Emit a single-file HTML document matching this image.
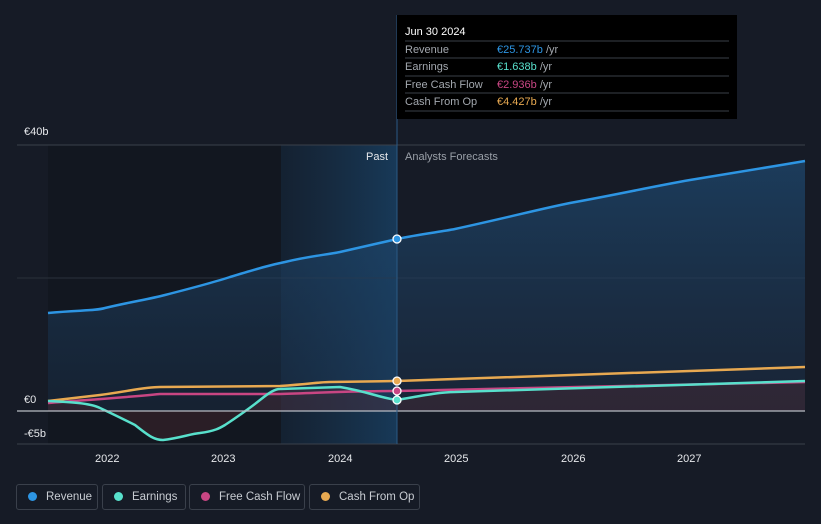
<!DOCTYPE html>
<html><head><meta charset="utf-8"><style>
body{margin:0;background:#161b26;width:821px;height:524px;overflow:hidden;font-family:"Liberation Sans",sans-serif;}
.lg{position:absolute;top:484px;height:26px;border:1px solid #3a404b;border-radius:3px;color:#c8ccd2;font-size:11.5px;line-height:24px;box-sizing:border-box;white-space:nowrap;overflow:hidden}
.lg i{display:inline-block;width:9px;height:9px;border-radius:50%;margin:0 9px 0 11px;vertical-align:-1px}
</style></head><body>
<svg width="821" height="524" style="position:absolute;left:0;top:0">
<defs>
<linearGradient id="rg" x1="0" y1="0" x2="0" y2="1"><stop offset="0" stop-color="#1e4a72" stop-opacity=".7"/><stop offset="1" stop-color="#1e3a5a" stop-opacity=".3"/></linearGradient>
<linearGradient id="hl" x1="0" y1="0" x2="1" y2="0"><stop offset="0" stop-color="#1a3a5a" stop-opacity=".3"/><stop offset="1" stop-color="#1a4870" stop-opacity=".7"/></linearGradient>
</defs>
<rect x="48" y="145" width="349" height="299" fill="#121720"/>
<rect x="281" y="145" width="116" height="299" fill="url(#hl)"/>
<line x1="17" y1="145" x2="805" y2="145" stroke="#3a404b"/>
<line x1="17" y1="278" x2="805" y2="278" stroke="#2a303b"/>
<path d="M48,313 C80,310 95,311 105,308 C130,302 150,299 165,295 C200,286 215,282 230,277 C260,268 270,265 285,262 C310,256 325,255 340,252 C370,245 380,243 397,239 C420,234 440,232 455,229 C510,217 540,209 570,203 C620,194 650,187 690,180 C740,172 770,167 805,161 L805,411 L48,411Z" fill="url(#rg)"/>
<path d="M48,401 C70,402 90,403 100,408 C115,415 125,420 135,425 C150,437 155,440 163,440 C180,438 190,434 200,433 C215,431 220,428 225,425 C240,415 250,408 260,400 C270,392 275,389 280,389 L340,387 C370,392 380,398 397,400 C420,396 440,392 455,392 L805,381 L805,411 L48,411Z" fill="#5a2a33" fill-opacity=".35"/>
<path d="M48,313 C80,310 95,311 105,308 C130,302 150,299 165,295 C200,286 215,282 230,277 C260,268 270,265 285,262 C310,256 325,255 340,252 C370,245 380,243 397,239 C420,234 440,232 455,229 C510,217 540,209 570,203 C620,194 650,187 690,180 C740,172 770,167 805,161" fill="none" stroke="#2d95e3" stroke-width="2.5"/>
<path d="M48,401 L100,395 C130,391 145,387 160,387 L280,386 C310,384 320,382 330,382 L397,381 L805,367" fill="none" stroke="#e8a951" stroke-width="2.5"/>
<path d="M48,403 C100,399 130,397 160,394 L280,394 C320,393 340,391 397,391 L805,382" fill="none" stroke="#c84683" stroke-width="2.5"/>
<path d="M48,401 C70,402 90,403 100,408 C115,415 125,420 135,425 C150,437 155,440 163,440 C180,438 190,434 200,433 C215,431 220,428 225,425 C240,415 250,408 260,400 C270,392 275,389 280,389 L340,387 C370,392 380,398 397,400 C420,396 440,392 455,392 L805,381" fill="none" stroke="#58e0cc" stroke-width="2.5"/>
<line x1="17" y1="411" x2="805" y2="411" stroke="#b8bcc4" stroke-width="1.2"/>
<line x1="17" y1="444" x2="805" y2="444" stroke="#3a404b"/>
<line x1="397" y1="15" x2="397" y2="444" stroke="#2a5a85"/>
<circle cx="397" cy="239" r="4" fill="#2d95e3" stroke="#fff" stroke-width="1.3"/>
<circle cx="397" cy="381" r="4" fill="#e8a951" stroke="#fff" stroke-width="1.3"/>
<circle cx="397" cy="391" r="4" fill="#c84683" stroke="#fff" stroke-width="1.3"/>
<circle cx="397" cy="400" r="4" fill="#58e0cc" stroke="#fff" stroke-width="1.3"/>
<g font-size="11" fill="#e6e8eb" font-family="Liberation Sans">
<text x="24" y="135">€40b</text><text x="24" y="403">€0</text><text x="24" y="437">-€5b</text>
<text x="95" y="462">2022</text><text x="211" y="462">2023</text><text x="328" y="462">2024</text><text x="444" y="462">2025</text><text x="561" y="462">2026</text><text x="677" y="462">2027</text>
<text x="366" y="160">Past</text>
<text x="405" y="160" fill="#9aa0a8">Analysts Forecasts</text>
</g>
<rect x="397" y="15" width="340" height="104" fill="#000"/>
<g font-size="11" font-family="Liberation Sans">
<text x="405" y="35" fill="#fff">Jun 30 2024</text>
<g stroke="#3a3f47"><line x1="405" y1="41" x2="729" y2="41"/><line x1="405" y1="58" x2="729" y2="58"/><line x1="405" y1="76" x2="729" y2="76"/><line x1="405" y1="93" x2="729" y2="93"/><line x1="405" y1="111" x2="729" y2="111"/></g>
<g fill="#a3a8af"><text x="405" y="53">Revenue</text><text x="405" y="70">Earnings</text><text x="405" y="88">Free Cash Flow</text><text x="405" y="105">Cash From Op</text></g>
<text x="497" y="53"><tspan fill="#2d95e3">€25.737b</tspan><tspan fill="#a3a8af"> /yr</tspan></text>
<text x="497" y="70"><tspan fill="#58e0cc">€1.638b</tspan><tspan fill="#a3a8af"> /yr</tspan></text>
<text x="497" y="88"><tspan fill="#c84683">€2.936b</tspan><tspan fill="#a3a8af"> /yr</tspan></text>
<text x="497" y="105"><tspan fill="#e8a951">€4.427b</tspan><tspan fill="#a3a8af"> /yr</tspan></text>
</g>
</svg>
<div class="lg" style="left:16px;width:82px"><i style="background:#2d95e3"></i>Revenue</div>
<div class="lg" style="left:102px;width:84px"><i style="background:#58e0cc"></i>Earnings</div>
<div class="lg" style="left:189px;width:116px"><i style="background:#c84683"></i>Free Cash Flow</div>
<div class="lg" style="left:309px;width:111px"><i style="background:#e8a951"></i>Cash From Op</div>
</body></html>
